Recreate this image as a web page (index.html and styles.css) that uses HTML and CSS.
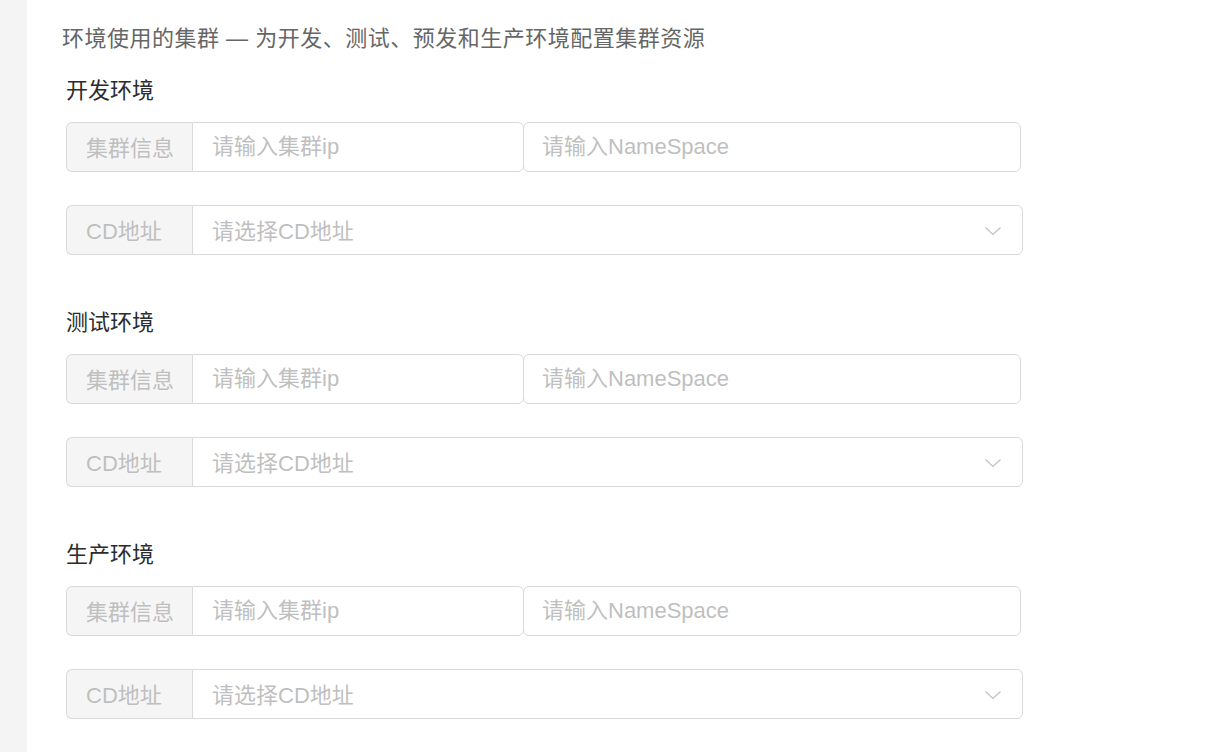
FILE: index.html
```html
<!DOCTYPE html>
<html lang="zh-CN">
<head>
    <meta charset="UTF-8">
    <meta name="viewport" content="width=device-width, initial-scale=1.0">
    <title>环境使用的集群</title>
    <link rel="stylesheet" href="styles.css">
</head>
<body>
    <div class="layout">
        <aside class="sidebar"></aside>
        <main class="content">
            <div class="intro">环境使用的集群 — 为开发、测试、预发和生产环境配置集群资源</div>

            <!-- 开发环境 -->
            <section class="env">
                <div class="env-title">开发环境</div>
                <div class="row">
                    <div class="group">
                        <span class="addon">集群信息</span>
                        <input class="field" type="text" placeholder="请输入集群ip">
                    </div>
                    <input class="field ns" type="text" placeholder="请输入NameSpace">
                </div>
                <div class="group select-group">
                    <span class="addon">CD地址</span>
                    <div class="select">
                        <span class="placeholder">请选择CD地址</span>
                        <svg class="arrow" width="16" height="10" viewBox="0 0 16 10"><polyline points="0.5,1.5 8,8.5 15.5,1.5" fill="none" stroke="#bfbfbf" stroke-width="1.1"/></svg>
                    </div>
                </div>
            </section>

            <!-- 测试环境 -->
            <section class="env">
                <div class="env-title">测试环境</div>
                <div class="row">
                    <div class="group">
                        <span class="addon">集群信息</span>
                        <input class="field" type="text" placeholder="请输入集群ip">
                    </div>
                    <input class="field ns" type="text" placeholder="请输入NameSpace">
                </div>
                <div class="group select-group">
                    <span class="addon">CD地址</span>
                    <div class="select">
                        <span class="placeholder">请选择CD地址</span>
                        <svg class="arrow" width="16" height="10" viewBox="0 0 16 10"><polyline points="0.5,1.5 8,8.5 15.5,1.5" fill="none" stroke="#bfbfbf" stroke-width="1.1"/></svg>
                    </div>
                </div>
            </section>

            <!-- 生产环境 -->
            <section class="env">
                <div class="env-title">生产环境</div>
                <div class="row">
                    <div class="group">
                        <span class="addon">集群信息</span>
                        <input class="field" type="text" placeholder="请输入集群ip">
                    </div>
                    <input class="field ns" type="text" placeholder="请输入NameSpace">
                </div>
                <div class="group select-group">
                    <span class="addon">CD地址</span>
                    <div class="select">
                        <span class="placeholder">请选择CD地址</span>
                        <svg class="arrow" width="16" height="10" viewBox="0 0 16 10"><polyline points="0.5,1.5 8,8.5 15.5,1.5" fill="none" stroke="#bfbfbf" stroke-width="1.1"/></svg>
                    </div>
                </div>
            </section>
        </main>
    </div>
</body>
</html>
```

FILE: styles.css
```css
/* General */
* {
    box-sizing: border-box;
}

body {
    margin: 0;
    font-family: 'Liberation Sans', 'Noto Sans CJK SC', sans-serif;
    font-size: 22px;
    background: #fff;
    color: #333;
}

.layout {
    display: flex;
    min-height: 752px;
}

.sidebar {
    width: 27px;
    flex-shrink: 0;
    background-color: #f4f4f4;
}

.content {
    flex: 1;
    padding: 24px 0 0 35px;
}

.intro {
    color: #666;
    line-height: 30px;
    height: 30px;
    letter-spacing: 0.5px;
}

/* Environment sections */
.env {
    padding-left: 4px;
    width: 961px;
}

.env:first-of-type {
    margin-top: 22px;
}

.env + .env {
    margin-top: 53px;
}

.env-title {
    line-height: 30px;
    height: 30px;
    color: #2b2b2b;
    margin-bottom: 16px;
}

.row {
    display: flex;
    margin-bottom: 33px;
}

/* Input group */
.group {
    display: flex;
    height: 50px;
}

.row .group {
    width: 458px;
}

.addon {
    width: 126px;
    flex-shrink: 0;
    display: flex;
    align-items: center;
    padding: 0 0 3px 19px;
    background-color: #f5f5f5;
    color: #bfbfbf;
    border: 1px solid #d9d9d9;
    border-right: none;
    border-radius: 6px 0 0 6px;
}

.field {
    flex: 1;
    min-width: 0;
    height: 50px;
    padding: 0 19px;
    font-family: inherit;
    font-size: 22px;
    color: #333;
    border: 1px solid #d9d9d9;
    border-radius: 0 6px 6px 0;
    outline: none;
}

.field::placeholder {
    color: #bfbfbf;
}

.ns {
    flex: none;
    width: 498px;
    margin-left: -1px;
    padding-left: 18px;
    border-radius: 6px;
}

/* Select */
.select {
    flex: 1;
    display: flex;
    align-items: center;
    justify-content: space-between;
    padding: 0 21px 0 19px;
    border: 1px solid #d9d9d9;
    border-radius: 0 6px 6px 0;
}

.select-group {
    width: 957px;
}

.placeholder {
    color: #bfbfbf;
    padding-bottom: 2px;
}

.arrow {
    margin-top: 2px;
}
```
